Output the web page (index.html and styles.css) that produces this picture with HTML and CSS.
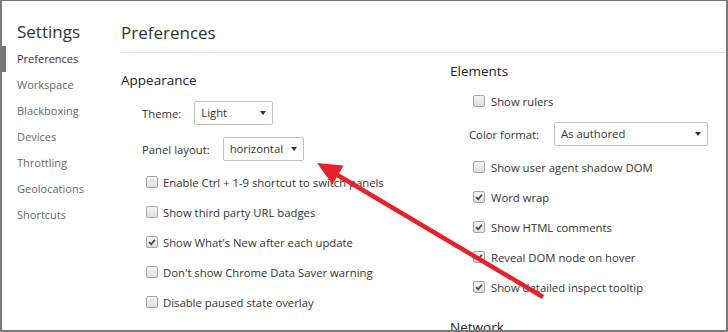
FILE: index.html
```html
<!DOCTYPE html>
<html lang="en">
<head>
  <meta charset="UTF-8">
  <title>Settings - Preferences</title>
  <link rel="stylesheet" href="styles.css">
</head>
<body>

  <div class="frame">
    <aside class="sidebar">
      <div class="sidebar-title">Settings</div>
      <ul class="tabs">
        <li class="tab active">Preferences</li>
        <li class="tab">Workspace</li>
        <li class="tab">Blackboxing</li>
        <li class="tab">Devices</li>
        <li class="tab">Throttling</li>
        <li class="tab">Geolocations</li>
        <li class="tab">Shortcuts</li>
      </ul>
    </aside>

    <main class="content">
      <h1 class="page-title">Preferences</h1>

      <div class="columns">
        <div class="col col-left">
          <section class="group">
            <h2 class="group-title">Appearance</h2>
            <div class="field first">
              <span class="field-label">Theme:</span>
              <div class="select select-theme">Light<span class="caret"></span></div>
            </div>
            <div class="field">
              <span class="field-label">Panel layout:</span>
              <div class="select select-layout">horizontal<span class="caret"></span></div>
            </div>
            <div class="checks">
              <div class="check"><span class="box"></span>Enable Ctrl + 1-9 shortcut to switch panels</div>
              <div class="check"><span class="box"></span>Show third party URL badges</div>
              <div class="check"><span class="box checked"><svg viewBox="0 0 12 12"><path d="M2.5 6.2 L5 8.6 L9.5 3.2" /></svg></span>Show What's New after each update</div>
              <div class="check"><span class="box"></span>Don't show Chrome Data Saver warning</div>
              <div class="check"><span class="box"></span>Disable paused state overlay</div>
            </div>
          </section>
        </div>

        <div class="col col-right">
          <section class="group">
            <h2 class="group-title">Elements</h2>
            <div class="check first"><span class="box"></span>Show rulers</div>
            <div class="field">
              <span class="field-label">Color format:</span>
              <div class="select select-color">As authored<span class="caret"></span></div>
            </div>
            <div class="check"><span class="box"></span>Show user agent shadow DOM</div>
            <div class="check"><span class="box checked"><svg viewBox="0 0 12 12"><path d="M2.5 6.2 L5 8.6 L9.5 3.2" /></svg></span>Word wrap</div>
            <div class="check"><span class="box checked"><svg viewBox="0 0 12 12"><path d="M2.5 6.2 L5 8.6 L9.5 3.2" /></svg></span>Show HTML comments</div>
            <div class="check"><span class="box checked"><svg viewBox="0 0 12 12"><path d="M2.5 6.2 L5 8.6 L9.5 3.2" /></svg></span>Reveal DOM node on hover</div>
            <div class="check"><span class="box checked"><svg viewBox="0 0 12 12"><path d="M2.5 6.2 L5 8.6 L9.5 3.2" /></svg></span>Show detailed inspect tooltip</div>
          </section>
          <section class="group">
            <h2 class="group-title next">Network</h2>
          </section>
        </div>
      </div>
    </main>

    <!-- flecha roja de la captura -->
    <svg class="arrow" width="728" height="332" viewBox="0 0 728 332">
      <line x1="543" y1="297" x2="334" y2="173" stroke="#e8202a" stroke-width="4.5" />
      <polygon points="317,163 332.5,184.5 343.5,165.5" fill="#e8202a" />
    </svg>
  </div>

</body>
</html>
```

FILE: styles.css
```css
* {
  box-sizing: border-box;
}

body {
  margin: 0;
  font-family: "Open Sans", "Noto Sans", sans-serif;
  font-size: 11.3px;
  color: #333;
  background-color: #fff;
}

.frame {
  position: relative;
  display: flex;
  height: 332px;
  border: 2px solid #7a7a7a;
  border-top-width: 1px;
  overflow: hidden;
}

/* barra lateral */
.sidebar {
  width: 119px;
  flex-shrink: 0;
  padding-top: 19px;
}

.sidebar-title {
  padding-left: 15px;
  font-size: 17px;
  line-height: 24px;
  color: #333;
  margin-bottom: 2px;
}

.tabs {
  list-style: none;
  margin: 0;
  padding: 0;
}

.tab {
  padding-left: 15px;
  line-height: 26px;
  font-size: 11px;
  color: #666;
}

.tab.active {
  color: #333;
  box-shadow: inset 4px 0 0 #777;
}

/* contenido */
.content {
  flex: 1;
}

.page-title {
  margin: 0;
  padding: 20px 0 7px;
  font-size: 17px;
  font-weight: normal;
  line-height: 24px;
  color: #333;
  border-bottom: 1px solid #e4e4e4;
}

.columns {
  display: flex;
}

.col-left {
  width: 329px;
  padding-top: 17px;
}

.col-right {
  flex: 1;
  padding-top: 8px;
}

.group-title {
  margin: 0;
  font-size: 13.5px;
  font-weight: normal;
  line-height: 20px;
  color: #222;
}

.group-title.next {
  margin-top: 15px;
}

.field {
  display: flex;
  align-items: center;
  height: 36px;
  padding-left: 21px;
}

.field.first {
  margin-top: 5px;
}

.field-label {
  margin-right: 13px;
}

.col-right .field {
  padding-left: 19px;
}

.col-right .field-label {
  margin-right: 15px;
}

.select {
  position: relative;
  height: 24px;
  line-height: 22px;
  padding-left: 6px;
  border: 1px solid #c2c2c2;
  border-radius: 2px;
  background-color: #fff;
}

.select-theme {
  width: 79px;
}

.select-layout {
  width: 81px;
}

.select-color {
  width: 154px;
}

.caret {
  position: absolute;
  right: 6px;
  top: 9px;
  width: 0;
  height: 0;
  border-left: 3.5px solid transparent;
  border-right: 3.5px solid transparent;
  border-top: 4px solid #333;
}

.check {
  display: flex;
  align-items: center;
  height: 30px;
  padding-left: 25px;
}

.col-right .check {
  padding-left: 23px;
}

.col-right .check.first {
  margin-top: 5px;
}

.box {
  width: 12px;
  height: 12px;
  margin-right: 6px;
  border: 1px solid #a6a6a6;
  border-radius: 2px;
  background: linear-gradient(#f4f4f4, #dedede);
}

.col-left .box {
  margin-right: 5px;
}

.box svg {
  display: block;
  width: 10px;
  height: 10px;
  fill: none;
  stroke: #444;
  stroke-width: 2;
}

.arrow {
  position: absolute;
  left: -2px;
  top: -1px;
  pointer-events: none;
}
```
